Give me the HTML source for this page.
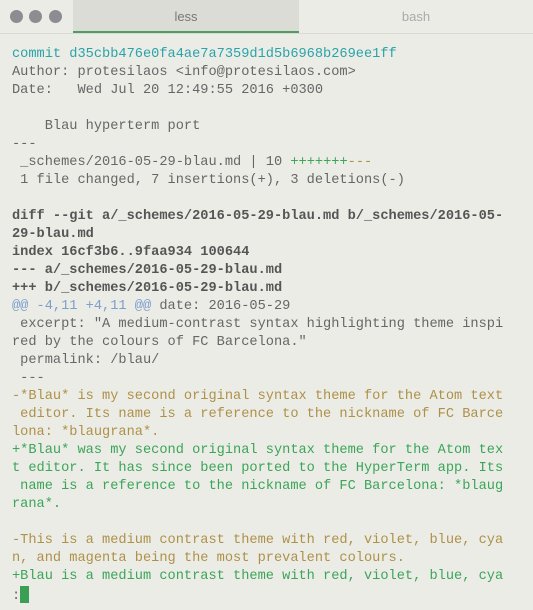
<!DOCTYPE html>
<html><head><style>
html,body{margin:0;padding:0;width:533px;height:610px;overflow:hidden;background:#ecece7;}
.bar{position:absolute;left:0;top:0;width:533px;height:33px;border-bottom:1px solid #dadad5;background:#ecece7;}
.dot{position:absolute;top:10px;width:13px;height:13px;border-radius:50%;background:#8d8c91;}
.tab{position:absolute;top:0;height:33px;text-align:center;font:13px "Liberation Sans",sans-serif;line-height:33px;}
.t1{left:73px;width:226px;background:#dcdcd6;color:#777;border-bottom:2px solid #4e9d63;height:31px;line-height:33px;}
.t2{left:299px;width:234px;color:#aaa;}
pre{position:absolute;left:12px;top:46px;margin:0;font:13.65px "Liberation Mono",monospace;line-height:18px;color:#666;}
.c{color:#2aa3a8}.b{font-weight:bold;color:#555}.h{color:#7c9fcc}.r{color:#ad9148}.g{color:#3ba558}
.cur{display:inline-block;width:9px;height:17px;background:#3a9e55;vertical-align:-4px;}
</style></head><body>
<div class="bar">
<div class="dot" style="left:10px"></div><div class="dot" style="left:29px"></div><div class="dot" style="left:49px"></div>
<div class="tab t1">less</div><div class="tab t2">bash</div>
</div>
<pre><span class="c">commit d35cbb476e0fa4ae7a7359d1d5b6968b269ee1ff</span>
Author: protesilaos &lt;info@protesilaos.com&gt;
Date:   Wed Jul 20 12:49:55 2016 +0300

    Blau hyperterm port
---
 _schemes/2016-05-29-blau.md | 10 <span class="g">+++++++</span><span class="r">---</span>
 1 file changed, 7 insertions(+), 3 deletions(-)

<span class="b">diff --git a/_schemes/2016-05-29-blau.md b/_schemes/2016-05-
29-blau.md
index 16cf3b6..9faa934 100644
--- a/_schemes/2016-05-29-blau.md
+++ b/_schemes/2016-05-29-blau.md</span>
<span class="h">@@ -4,11 +4,11 @@</span> date: 2016-05-29
 excerpt: "A medium-contrast syntax highlighting theme inspi
red by the colours of FC Barcelona."
 permalink: /blau/
 ---
<span class="r">-*Blau* is my second original syntax theme for the Atom text
 editor. Its name is a reference to the nickname of FC Barce
lona: *blaugrana*.</span>
<span class="g">+*Blau* was my second original syntax theme for the Atom tex
t editor. It has since been ported to the HyperTerm app. Its
 name is a reference to the nickname of FC Barcelona: *blaug
rana*.</span>

<span class="r">-This is a medium contrast theme with red, violet, blue, cya
n, and magenta being the most prevalent colours.</span>
<span class="g">+Blau is a medium contrast theme with red, violet, blue, cya</span>
:<span class="cur"></span></pre>
</body></html>
